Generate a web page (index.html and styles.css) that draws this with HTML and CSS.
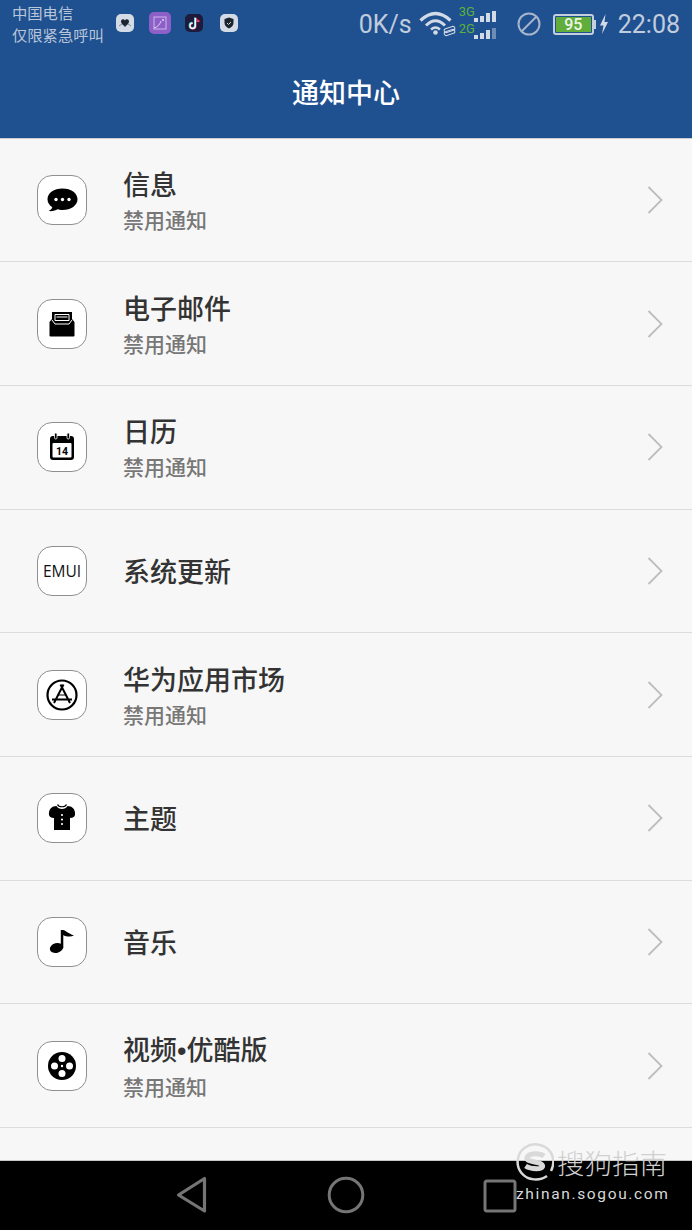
FILE: index.html
```html
<!DOCTYPE html>
<html lang="zh">
<head>
<meta charset="utf-8">
<title>通知中心</title>
<link rel="stylesheet" href="styles.css">
</head>
<body>
<div class="screen">
  <header class="top">
    <div class="status">
      <div class="carrier"><span>中国电信</span><span>仅限紧急呼叫</span></div>
      <div class="notifs">
        <svg class="n n1" viewBox="0 0 18 18"><rect width="18" height="18" rx="5" fill="#d3dbe6"/><path d="M5 7.500C5 5 8 4.500 9 6.500C10 4.500 13 5 13 7.500C13 10 10 11 9 12.500C8 11 5 10 5 7.500Z" fill="#1c2430"/><path d="M3 12l3-2 3 3 3-3 3 2" fill="none" stroke="#7f8a99"/></svg>
        <svg class="n n2" viewBox="0 0 22 22"><rect width="22" height="22" rx="5" fill="#8d5fc9"/><rect x="5" y="5" width="12" height="12" fill="none" stroke="#cdb8ea" stroke-width="1"/><path d="M5 16C9 15 11 12 12 9" fill="none" stroke="#e0d4f2"/><circle cx="14" cy="8" r="1" fill="#e0d4f2"/></svg>
        <svg class="n n3" viewBox="0 0 18 18"><rect width="18" height="18" rx="5" fill="#1d1a3a"/><path d="M10 3.500V11.500A2.700 2.700 0 1 1 7.300 8.800M10 4C10.500 6 11.800 7 13.800 7.200" fill="none" stroke="#25e3e6" stroke-width="2"/><path d="M10.800 3.500V12A2.700 2.700 0 1 1 8.100 9.300M10.800 4C11.300 6 12.600 7 14.600 7.200" fill="none" stroke="#f0315f" stroke-width="1.500"/><path d="M10.400 4V11.800A2.700 2.700 0 1 1 7.700 9.100" fill="none" stroke="#fff" stroke-width="1.300"/></svg>
        <svg class="n n4" viewBox="0 0 18 18"><rect width="18" height="18" rx="5" fill="#d3dbe6"/><path d="M9 3.500L13.500 5V9C13.500 11.500 11.500 13.500 9 14.500C6.500 13.500 4.500 11.500 4.500 9V5Z" fill="#1c2430"/><path d="M7 9l1.500 1.500 2.500-2.500" fill="none" stroke="#d3dbe6"/></svg>
      </div>
      <div class="sys">
        <span class="speed">0K/s</span>
        <svg class="wifi" viewBox="0 0 38 27"><path d="M1.500 10.500Q16.500 -3.500 31.500 10.500" fill="none" stroke="#d2dae6" stroke-width="3.200"/><path d="M7 15.500Q16.500 6 26 15.500" fill="none" stroke="#d2dae6" stroke-width="3"/><path d="M12 19.500Q16.500 15.500 21 19.500" fill="none" stroke="#d2dae6" stroke-width="2.400"/><circle cx="16.500" cy="22.500" r="2.300" fill="#d2dae6"/><rect x="25" y="17.500" width="11" height="4" rx="2" fill="none" stroke="#d2dae6" transform="rotate(-18 30.500 19.500)"/><rect x="25" y="20.500" width="11" height="4" rx="2" fill="none" stroke="#d2dae6" transform="rotate(-18 30.500 22.500)"/></svg>
        <div class="sim">
          <div class="sim-row"><span>3G</span><i class="b1"></i><i class="b2"></i><i class="b3"></i><i class="b4"></i></div>
          <div class="sim-row"><span>2G</span><i class="b1"></i><i class="b2"></i><i class="b3"></i><i class="b4 dim"></i></div>
        </div>
        <svg class="dnd" viewBox="0 0 24 24"><circle cx="12" cy="12" r="10.500" fill="none" stroke="#a7b5cb" stroke-width="2"/><path d="M5 19L19 5" stroke="#a7b5cb" stroke-width="2"/></svg>
        <div class="battery"><span class="level">95</span></div>
        <svg class="bolt" viewBox="0 0 10 20"><path d="M6.500 0L1 11.500H4.500L3 20L9 8H5.500Z" fill="#d2dae6"/></svg>
        <span class="clock">22:08</span>
      </div>
    </div>
    <h1 class="title">通知中心</h1>
  </header>

  <main class="list">
    <div class="row">
      <div class="icon"><svg viewBox="0 0 50 50"><path d="M25.500 13.500C34 13.500 40.500 18 40.500 24.200C40.500 30.200 34 35 25.500 35C23.500 35 22 34.700 20.500 34.300C18.500 35.700 15 36.500 11.500 36C13.500 35.200 14.800 34 15.300 32.300C12.500 30.300 10.500 27.500 10.500 24.200C10.500 18 17 13.500 25.500 13.500Z"/><circle cx="19" cy="24.500" r="1.700" fill="#fff"/><circle cx="25.500" cy="24.500" r="1.700" fill="#fff"/><circle cx="32" cy="24.500" r="1.700" fill="#fff"/></svg></div>
      <div class="text"><div class="name">信息</div><div class="sub">禁用通知</div></div>
      <svg class="chev" viewBox="0 0 16 28"><path d="M1.500 1L14.500 14L1.500 27" fill="none" stroke="#bdbdbd" stroke-width="1.800"/></svg>
    </div>
    <div class="row">
      <div class="icon"><svg viewBox="0 0 50 50"><path d="M15 13H35V20L37.500 23V36.500A1 1 0 0 1 36.500 37.500H13.500A1 1 0 0 1 12.500 36.500V23L15 20Z"/><path d="M18 15.500H32V21.500H18Z" fill="none" stroke="#fff" stroke-width="1"/><path d="M19.500 18H30.500" stroke="#fff" stroke-width="1.200"/><path d="M15 21L18 25H32L35 21" fill="none" stroke="#fff" stroke-width="1"/></svg></div>
      <div class="text"><div class="name">电子邮件</div><div class="sub">禁用通知</div></div>
      <svg class="chev" viewBox="0 0 16 28"><path d="M1.500 1L14.500 14L1.500 27" fill="none" stroke="#bdbdbd" stroke-width="1.800"/></svg>
    </div>
    <div class="row">
      <div class="icon"><svg viewBox="0 0 50 50"><rect x="13" y="14" width="24" height="24" rx="3"/><rect x="15.500" y="21" width="19" height="14.500" rx="1" fill="#fff"/><rect x="17.500" y="11" width="2.500" height="6" rx="1.200" stroke="#fff" stroke-width=".8"/><rect x="30" y="11" width="2.500" height="6" rx="1.200" stroke="#fff" stroke-width=".8"/><text class="cal" x="25" y="33" text-anchor="middle">14</text></svg></div>
      <div class="text"><div class="name">日历</div><div class="sub">禁用通知</div></div>
      <svg class="chev" viewBox="0 0 16 28"><path d="M1.500 1L14.500 14L1.500 27" fill="none" stroke="#bdbdbd" stroke-width="1.800"/></svg>
    </div>
    <div class="row">
      <div class="icon emui">EMUI</div>
      <div class="text"><div class="name">系统更新</div></div>
      <svg class="chev" viewBox="0 0 16 28"><path d="M1.500 1L14.500 14L1.500 27" fill="none" stroke="#bdbdbd" stroke-width="1.800"/></svg>
    </div>
    <div class="row">
      <div class="icon"><svg viewBox="0 0 50 50"><circle cx="25" cy="25" r="14.500" fill="none" stroke="#000" stroke-width="2.200"/><path d="M23.500 14.500L33 33M26.500 14.500L17 33M15 29.500H35" fill="none" stroke="#000" stroke-width="2"/><path d="M20.500 25H29.500" stroke="#000" stroke-width="1.200"/></svg></div>
      <div class="text"><div class="name">华为应用市场</div><div class="sub">禁用通知</div></div>
      <svg class="chev" viewBox="0 0 16 28"><path d="M1.500 1L14.500 14L1.500 27" fill="none" stroke="#bdbdbd" stroke-width="1.800"/></svg>
    </div>
    <div class="row">
      <div class="icon"><svg viewBox="0 0 50 50"><path d="M19.500 13C21.500 17 28.500 17 30.500 13L33.500 13.500C36.500 14.500 38.500 18 38 21.500C38 23.500 36 25 33 25V37H17V25C14 25 12 23.500 12 21.500C11.500 18 13.500 14.500 16.500 13.500Z"/><circle cx="25" cy="22" r="1.100" fill="#fff"/><circle cx="25" cy="26.500" r="1.100" fill="#fff"/><circle cx="25" cy="31" r="1.100" fill="#fff"/><path d="M20.500 11.500C22 14.500 28 14.500 29.500 11.500" fill="none" stroke="#000" stroke-width="1.200"/></svg></div>
      <div class="text"><div class="name">主题</div></div>
      <svg class="chev" viewBox="0 0 16 28"><path d="M1.500 1L14.500 14L1.500 27" fill="none" stroke="#bdbdbd" stroke-width="1.800"/></svg>
    </div>
    <div class="row">
      <div class="icon"><svg viewBox="0 0 50 50"><ellipse cx="19.500" cy="31" rx="6.800" ry="4.800" transform="rotate(-15 19.500 31)"/><path d="M23.800 13H26.300V31H23.800Z"/><path d="M26 13C29 13.500 31 16.500 37 18.500C33.500 20.500 29 19.500 26 18Z"/></svg></div>
      <div class="text"><div class="name">音乐</div></div>
      <svg class="chev" viewBox="0 0 16 28"><path d="M1.500 1L14.500 14L1.500 27" fill="none" stroke="#bdbdbd" stroke-width="1.800"/></svg>
    </div>
    <div class="row">
      <div class="icon"><svg viewBox="0 0 50 50"><circle cx="25" cy="25" r="14"/><circle cx="25" cy="17.500" r="3.500" fill="#fff"/><circle cx="25" cy="32.500" r="3.500" fill="#fff"/><circle cx="17.500" cy="25" r="3.500" fill="#fff"/><circle cx="32.500" cy="25" r="3.500" fill="#fff"/><circle cx="25" cy="25" r="1.200" fill="#fff"/></svg></div>
      <div class="text"><div class="name">视频<span class="dot">•</span>优酷版</div><div class="sub">禁用通知</div></div>
      <svg class="chev" viewBox="0 0 16 28"><path d="M1.500 1L14.500 14L1.500 27" fill="none" stroke="#bdbdbd" stroke-width="1.800"/></svg>
    </div>
  </main>

  <nav class="nav">
    <svg class="back" viewBox="0 0 32 38"><path d="M28.500 2.500V35L2.500 19Z" fill="none" stroke="#757575" stroke-width="3.200" stroke-linejoin="round"/></svg>
    <svg class="home" viewBox="0 0 38 38"><circle cx="19" cy="19" r="16.800" fill="none" stroke="#757575" stroke-width="3"/></svg>
    <svg class="recent" viewBox="0 0 34 34"><rect x="2" y="2" width="30" height="30" rx="2" fill="none" stroke="#757575" stroke-width="3"/></svg>
  </nav>

  <div class="mark">
    <div class="mark-top">
      <svg class="mark-logo" viewBox="0 0 38 38"><path d="M31 33C24 38 12 38 5.500 30C-1 22 1 10 9 4.500C17.500 -1 29 1 34.500 9C38 14.500 38 22 35 28" fill="none" stroke="#d9d9d9" stroke-width="2.500"/><path d="M28 13C24 10 13 9.500 11 14.500C9.500 20 25 18 26.500 22.500C27.500 27 15 26.500 9.500 23" fill="none" stroke="#d9d9d9" stroke-width="5"/></svg>
      <span class="mark-name">搜狗指南</span>
    </div>
    <div class="mark-url">zhinan.sogou.com</div>
  </div>
</div>
</body>
</html>
```

FILE: styles.css
```css
* { box-sizing: border-box; }
html, body { margin: 0; padding: 0; }
body { width: 692px; height: 1230px; overflow: hidden; font-family: "Noto Sans CJK SC", "Noto Sans", sans-serif; background: #f7f7f7; }
.screen { position: relative; width: 692px; height: 1230px; display: flex; flex-direction: column; }

.top { flex: none; height: 138.500px; background: #1f5090; border-bottom: 1px solid #c9ccd1; display: flex; flex-direction: column; }
.status { flex: none; height: 48px; display: flex; align-items: center; padding: 0 12px; }
.carrier { flex: none; width: 104px; display: flex; flex-direction: column; font-size: 15.300px; line-height: 21.500px; color: #b9c6d9; white-space: nowrap; margin-top: -1px; }
.notifs { flex: none; display: flex; align-items: center; height: 24px; margin-top: -2px; }
.n { display: block; }
.n1, .n3, .n4 { width: 18px; height: 18px; }
.n2 { width: 22px; height: 22px; margin-left: 15px; }
.n3 { margin-left: 14px; }
.n4 { margin-left: 17px; }
.sys { flex: none; display: flex; align-items: center; margin-left: auto; height: 48px; }
.speed { flex: none; width: 60px; font-family: Roboto, sans-serif; font-size: 25px; color: #c1ccdd; }
.wifi { flex: none; width: 38px; height: 27px; margin-top: -1px; }
.sim { flex: none; width: 38px; margin-left: 2px; display: flex; flex-direction: column; gap: 0; margin-top: -5px; }
.sim-row { display: flex; align-items: flex-end; height: 17px; }
.sim-row span { flex: none; font-family: Roboto, sans-serif; font-size: 13px; line-height: 14px; color: #5cb33b; width: 15px; align-self: flex-start; }
.sim-row i { display: block; flex: none; width: 4px; background: #d2dae6; margin-right: 2px; }
.sim-row i:last-child { margin-right: 0; }
.b1 { height: 4px; }
.b2 { height: 6px; }
.b3 { height: 9px; }
.b4 { height: 11px; }
.sim-row i.dim { background: #6f8cb4; }
.dnd { flex: none; width: 24px; height: 24px; margin-left: 20px; }
.battery { flex: none; width: 41px; height: 21px; margin-left: 12px; border: 2px solid #c3cedf; border-radius: 3px; padding: 1px; position: relative; }
.battery::after { content: ""; position: absolute; right: -4px; top: 4px; width: 2px; height: 9px; background: #c3cedf; }
.level { display: block; height: 100%; background: #60ad3b; color: #eef6e8; font: 500 16px/15px Roboto, sans-serif; text-align: center; }
.bolt { flex: none; width: 10px; height: 20px; margin-left: 5px; }
.clock { flex: none; font-family: Roboto, sans-serif; font-size: 25px; color: #c1ccdd; margin-left: 9px; }

.title { margin: 0; font-size: 27px; line-height: 40px; font-weight: 500; color: #fff; text-align: center; padding-top: 25px; transform: translateY(-1px); }

.list { flex: 1; min-height: 0; overflow: hidden; }
.row { height: 123.700px; border-bottom: 1px solid #dcdcdc; padding: 0 29px 0 37px; display: flex; align-items: center; }
.icon { flex: none; width: 50px; height: 50px; background: #fff; border: 1px solid #8f8f8f; border-radius: 15px; overflow: hidden; display: flex; align-items: center; justify-content: center; }
.icon svg { width: 50px; height: 50px; flex: none; }
.emui { font-family: "Open Sans", sans-serif; font-size: 15.500px; color: #111; }
.cal { font: 700 10.500px Roboto, sans-serif; }
.text { flex: 1; min-width: 0; margin-left: 36px; display: flex; flex-direction: column; }
.name { font-size: 27px; line-height: 38px; color: #333; font-weight: 500; }
.dot { font-family: "Liberation Sans", sans-serif; }
.sub { font-size: 21px; line-height: 32px; color: #777; font-weight: 500; }
.chev { flex: none; width: 16px; height: 28px; }

.nav { position: relative; flex: none; height: 70px; background: #000; border-top: 1px solid #c8c8c8; }
.back { position: absolute; left: 176px; top: 15px; width: 32px; height: 38px; }
.home { position: absolute; left: 327px; top: 15px; width: 38px; height: 38px; }
.recent { position: absolute; left: 483px; top: 18px; width: 34px; height: 34px; }

.mark { position: absolute; left: 516px; top: 1143px; width: 160px; color: #d9d9d9; }
.mark-top { display: flex; align-items: center; }
.mark-logo { width: 38px; height: 38px; flex: none; }
.mark-name { font-size: 27.500px; line-height: 38px; margin-left: 3px; white-space: nowrap; font-weight: 300; color: #d0d0d0; }
.mark-url { font-family: Roboto, sans-serif; font-size: 15.500px; line-height: 18px; letter-spacing: 1.650px; margin-top: 4px; white-space: nowrap; }
```
